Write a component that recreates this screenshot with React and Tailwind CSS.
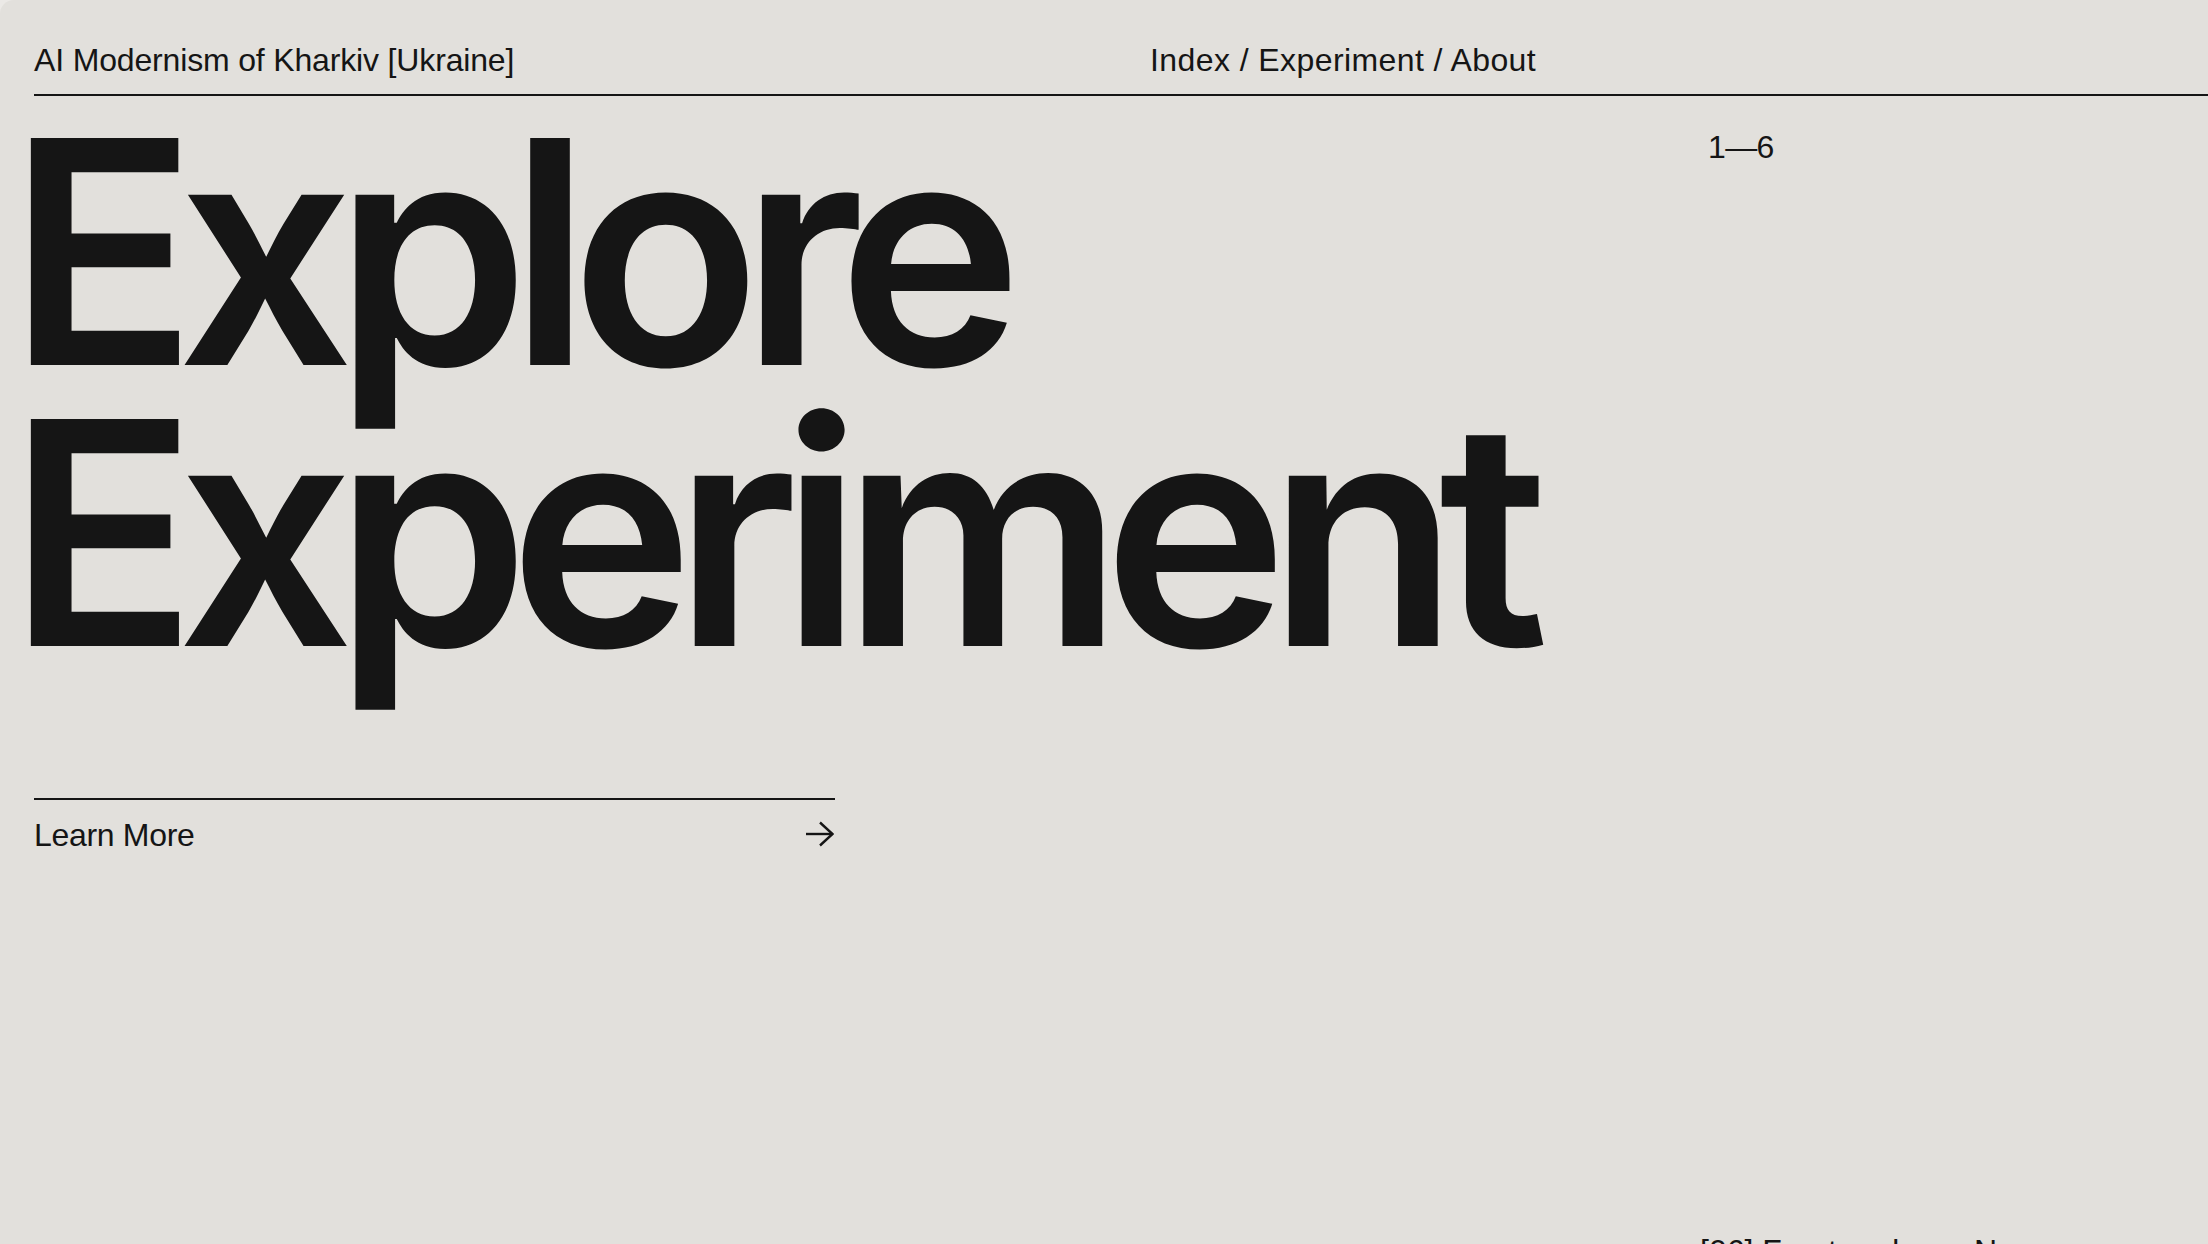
import React from 'react';

const ArrowRight = () => (
  <svg width="28" height="26" viewBox="0 0 28 26" fill="none" stroke="#151515" strokeWidth="2.4" className="mt-[2px] mr-[1px]">
    <path d="M0 13H26.5" />
    <path d="M14 1.5L26.5 13L14 24.5" />
  </svg>
);

const App = () => {
  return (
    <div className="w-full h-[1244px] overflow-hidden bg-[#ebe9e6] text-[#151515] font-['Liberation_Sans',Arial,sans-serif]">
      <div className="h-full rounded-tl-[14px] bg-[#e2e0dc]">
        {/* top bar */}
        <header className="ml-[34px] flex border-b-2 border-[#151515] pt-[44px] pb-[18px] text-[32px] leading-[32px]">
          <div className="w-[1116px] shrink-0 tracking-[-0.005em]">AI Modernism of Kharkiv [Ukraine]</div>
          <nav className="tracking-[0.013em]">Index / Experiment / About</nav>
        </header>

        <div className="flex">
          <main className="w-[1700px] shrink-0">
            <h1 className="mt-[15px] pl-[8px] font-['Inter',sans-serif] font-semibold text-[312px] leading-[281px] tracking-[-0.064em]">
              Explore
              <br />
              Experiment
            </h1>

            <div className="ml-[34px] mt-[125px] w-[801px] border-t-2 border-[#151515] pt-[19px] flex justify-between items-start text-[32px] leading-[32px]">
              <span className="tracking-[-0.01em]">Learn More</span>
              <ArrowRight />
            </div>
          </main>

          <aside className="pt-[35px] text-[32px] leading-[32px]">
            <div className="ml-[8px] tracking-[-0.02em]">1—6</div>
            <div className="mt-[1072px] whitespace-nowrap">[06] Front and rear Narrow</div>
          </aside>
        </div>
      </div>
    </div>
  );
};

export default App;
